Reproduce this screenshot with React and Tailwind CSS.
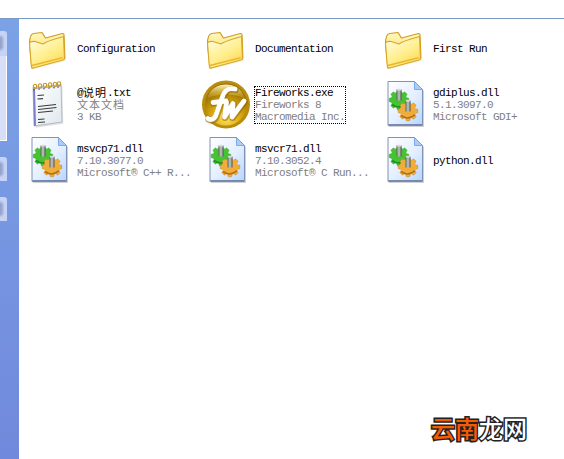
import React from "react";

const FONT = "font-['Liberation_Mono','Noto_Sans_CJK_SC',monospace]";

function Folder() {
  return (
    <svg width="48" height="48" viewBox="0 0 48 48">
      <defs>
        <linearGradient id="fo" x1="0.1" y1="0.1" x2="0.7" y2="1">
          <stop offset="0" stopColor="#fffbd8" />
          <stop offset="0.55" stopColor="#ffef8e" />
          <stop offset="1" stopColor="#ffd955" />
        </linearGradient>
        <linearGradient id="fb" x1="0" y1="0" x2="0" y2="1">
          <stop offset="0" stopColor="#fff8bd" />
          <stop offset="1" stopColor="#f7cc42" />
        </linearGradient>
      </defs>
      <path d="M8 44.5 L42 36 L41.5 12 L8 20 Z" fill="#e9e2c8" opacity="0.45" transform="translate(0.8 1)" />
      <path d="M6.5 20 C6.5 14 7.5 10 10.5 9.5 L19 8.5 L22.5 14 L39.5 9.5 Q41 9.5 41 11 L41.8 34 L9 44 Z" fill="url(#fb)" stroke="#cf9c1e" strokeWidth="1.2" strokeLinejoin="round" />
      <path d="M6.5 19 Q8 17 12 17.5 L20 20 Q24 17 40.5 12.5 L41.5 34.5 Q41.5 35.5 40 36 L10.5 44 Q8.5 44.5 8.3 42 Z" fill="url(#fo)" stroke="#d8a526" strokeWidth="1.1" strokeLinejoin="round" />
      <path d="M9 41.5 L39.8 33.6" stroke="#e8b52e" strokeWidth="1.4" fill="none" />
    </svg>
  );
}

function Notepad() {
  return (
    <svg width="48" height="48" viewBox="0 0 48 48">
      <defs>
        <linearGradient id="np" x1="0" y1="0" x2="1" y2="1">
          <stop offset="0" stopColor="#ffffff" />
          <stop offset="1" stopColor="#dfe8ee" />
        </linearGradient>
      </defs>
      <path d="M11 8 L38.5 5 L39.5 43 L12 47 Z" fill="#c4c4c4" opacity="0.5" transform="translate(0.8 0.8)" />
      <path d="M10 7.5 L38 4.5 L39 42 L11 46 Z" fill="url(#np)" stroke="#a9b0bb" strokeWidth="0.8" />
      <path d="M10 7.5 L12 7.3 L13 45.7 L11 46 Z" fill="#7b7fd0" />
      <path d="M10.5 8 L38 5 L38 6.5 L10.5 9.5 Z" fill="#b9b8df" />
      {[12, 17, 22, 27, 32, 36].map((x, i) => (
        <g key={i}>
          <ellipse cx={x} cy={6.3 - i * 0.5} rx="1.7" ry="2.1" fill="none" stroke="#c89a22" strokeWidth="1.1" />
          <path d={`M${x - 1} ${9 - i * 0.5} v1.4`} stroke="#3a3a3a" strokeWidth="1" />
        </g>
      ))}
      <g stroke="#3a3a3a" strokeWidth="1.1" fill="none">
        <path d="M14.5 15.5 L21 15" />
        <path d="M14.5 19 L20 18.6" />
        <path d="M15 26.5 L33 24.5" />
        <path d="M15 29.5 L33.5 27.5" />
        <path d="M15 32.5 L30 31" />
        <path d="M15 39.5 L21.5 39" />
        <path d="M15 42.5 L22 42" />
      </g>
    </svg>
  );
}

function Gear({ cx, cy, r, fill, stroke, teeth = 8 }) {
  const items = Array.from({ length: teeth }, (_, i) => (i * 360) / teeth);
  return (
    <g>
      {items.map((a) => (
        <rect key={a} x={cx - 2} y={cy - r - 1.6} width="4" height="5" rx="0.8" fill={fill} stroke={stroke} strokeWidth="0.4" transform={`rotate(${a} ${cx} ${cy})`} />
      ))}
      <circle cx={cx} cy={cy} r={r} fill={fill} />
    </g>
  );
}

function Dll() {
  return (
    <svg width="48" height="48" viewBox="0 0 48 48">
      <defs>
        <linearGradient id="dl" x1="0" y1="0" x2="1" y2="1">
          <stop offset="0" stopColor="#ffffff" />
          <stop offset="0.55" stopColor="#e3efff" />
          <stop offset="1" stopColor="#b5d5ff" />
        </linearGradient>
        <linearGradient id="pin" x1="0" y1="0" x2="1" y2="0">
          <stop offset="0" stopColor="#5d6660" />
          <stop offset="0.5" stopColor="#c6ccc8" />
          <stop offset="1" stopColor="#4d544f" />
        </linearGradient>
      </defs>
      <path d="M10 3 L36 3 L45 11 L45 47 L10 47 Z" fill="#9a9aa0" opacity="0.45" />
      <path d="M9 1.5 L35.5 1.5 L43.5 9.5 L43.5 45.5 L9 45.5 Z" fill="url(#dl)" stroke="#7f93b8" strokeWidth="1" />
      <path d="M35.5 1.5 L35.5 9.5 L43.5 9.5 Z" fill="#a9cdf8" stroke="#6d9ce0" strokeWidth="0.8" />
      <path d="M9.5 44.7 L43 44.7" stroke="#5f73a0" strokeWidth="1" />
      <Gear cx={20} cy={20} r={8.2} fill="#46c430" stroke="#2c9420" />
      <path d="M13 24.5 Q20 30 27 23.5" stroke="#1f8f25" strokeWidth="1.6" fill="none" />
      <rect x="17.5" y="9.5" width="5" height="11" fill="url(#pin)" />
      <ellipse cx="20" cy="9.7" rx="2.5" ry="1" fill="#d6dad7" />
      <Gear cx={29} cy={31} r={8.2} fill="#f0ad3c" stroke="#b87412" />
      <path d="M22 35.5 Q29 41 36 34.5" stroke="#b56f12" strokeWidth="1.6" fill="none" />
      <rect x="26.5" y="20.5" width="5" height="11" fill="url(#pin)" />
      <ellipse cx="29" cy="20.7" rx="2.5" ry="1" fill="#d6dad7" />
    </svg>
  );
}

function FwLogo() {
  const f = "M34 9 C26 7.5 23 11 21 18 L15 35 C13.5 39.5 9.5 40.5 7 38.5";
  const bar = "M12 22.5 L25 21";
  const w = "M25.5 22.5 L23.5 37 L32 23.5 L31 37 L43 21";
  return (
    <svg width="50" height="50" viewBox="0 0 50 50" className="-mr-[2px]">
      <defs>
        <radialGradient id="fwb" cx="0.5" cy="0.82" r="0.75">
          <stop offset="0" stopColor="#ffe35c" />
          <stop offset="0.45" stopColor="#dcab12" />
          <stop offset="0.8" stopColor="#a87d06" />
          <stop offset="1" stopColor="#8b6604" />
        </radialGradient>
        <linearGradient id="fwh" x1="0" y1="0" x2="0" y2="1">
          <stop offset="0" stopColor="#fff7c0" />
          <stop offset="1" stopColor="#e9bd2a" stopOpacity="0.15" />
        </linearGradient>
      </defs>
      <circle cx="25" cy="24.5" r="24" fill="#b98d0c" />
      <circle cx="25" cy="24.5" r="21" fill="url(#fwb)" />
      <path d="M6 19 C9 8 17 4.5 25 4.5 C33 4.5 41 8 44 19 C36 13 14 13 6 19 Z" fill="url(#fwh)" />
      <g fill="none" stroke="#8a6404" strokeWidth="6.6" strokeLinecap="round" strokeLinejoin="round" opacity="0.55" transform="translate(0.6 0.8)">
        <path d={f} />
        <path d={bar} />
        <path d={w} />
      </g>
      <g fill="none" stroke="#ffffff" strokeWidth="4.8" strokeLinecap="round" strokeLinejoin="round">
        <path d={f} />
        <path d={bar} />
        <path d={w} />
      </g>
    </svg>
  );
}

const zh = (s) => <span className="text-[11px] tracking-[1px] leading-[12px] align-[-1px]">{s}</span>;

const items = [
  { icon: <Folder />, lines: ["Configuration"] },
  { icon: <Folder />, lines: ["Documentation"] },
  { icon: <Folder />, lines: ["First Run"] },
  { icon: <Notepad />, lines: [<>@{zh("说明")}.txt</>, zh("文本文档"), "3 KB"] },
  { icon: <FwLogo />, lines: ["Fireworks.exe", "Fireworks 8", "Macromedia Inc."], focus: true },
  { icon: <Dll />, lines: ["gdiplus.dll", "5.1.3097.0", "Microsoft GDI+"] },
  { icon: <Dll />, lines: ["msvcp71.dll", "7.10.3077.0", "Microsoft® C++ R..."] },
  { icon: <Dll />, lines: ["msvcr71.dll", "7.10.3052.4", "Microsoft® C Run..."] },
  { icon: <Dll />, lines: ["python.dll"] },
];

function Item({ icon, lines, focus }) {
  return (
    <div className="flex items-center">
      <div className="w-[48px] h-[48px] shrink-0">{icon}</div>
      <div className={`ml-[6px] mt-[1px] w-fit text-[11px] tracking-[-0.6px] leading-[12px] whitespace-nowrap ${focus ? "outline-1 outline-dotted outline-black" : ""}`}>
        {lines.map((l, i) => (
          <div key={i} className={`h-[12px] ${i === 0 ? "text-black" : "text-[#808080]"}`}>{l}</div>
        ))}
      </div>
    </div>
  );
}

function CollapsedPanel({ h }) {
  return (
    <div className={`relative w-[7px] ${h} bg-[#c6d3f6] rounded-tr-[3px] overflow-hidden`}>
      <div className="absolute -left-[3px] top-[5px] w-[6px] h-[14px] rounded-full bg-[#94a3cc] blur-[1px]" />
    </div>
  );
}

export default function App() {
  return (
    <div className={`relative w-[564px] h-[459px] bg-white overflow-hidden flex flex-col ${FONT}`}>
      <div className="h-[18px] shrink-0 bg-white" />
      <div className="h-[1px] shrink-0 bg-[#7a9cc4]" />
      <div className="flex flex-1 min-h-0">
        <aside className="w-[19px] shrink-0 bg-gradient-to-b from-[#7ba2e7] to-[#7189dc] pt-[12px] flex flex-col">
          <CollapsedPanel h="h-[25px]" />
          <div className="w-[7px] h-[85px] bg-[#d6dff7] border-r border-b border-white" />
          <div className="mt-[16px]"><CollapsedPanel h="h-[24px]" /></div>
          <div className="mt-[16px]"><CollapsedPanel h="h-[24px]" /></div>
        </aside>
        <main className="flex-1 pl-[4px] pt-[1px]">
          <div className="grid grid-cols-[178px_178px_178px] auto-rows-[56px]">
            {items.map((it, i) => <Item key={i} {...it} />)}
          </div>
        </main>
      </div>
      <div className="absolute left-[431px] top-[412px] text-[24px] leading-[32px] font-medium font-['Noto_Sans_CJK_SC',sans-serif] whitespace-nowrap [paint-order:stroke_fill] [-webkit-text-stroke:3px_#222222]">
        <span className="text-[#f25c05]">云南</span><span className="text-white">龙网</span>
      </div>
    </div>
  );
}
